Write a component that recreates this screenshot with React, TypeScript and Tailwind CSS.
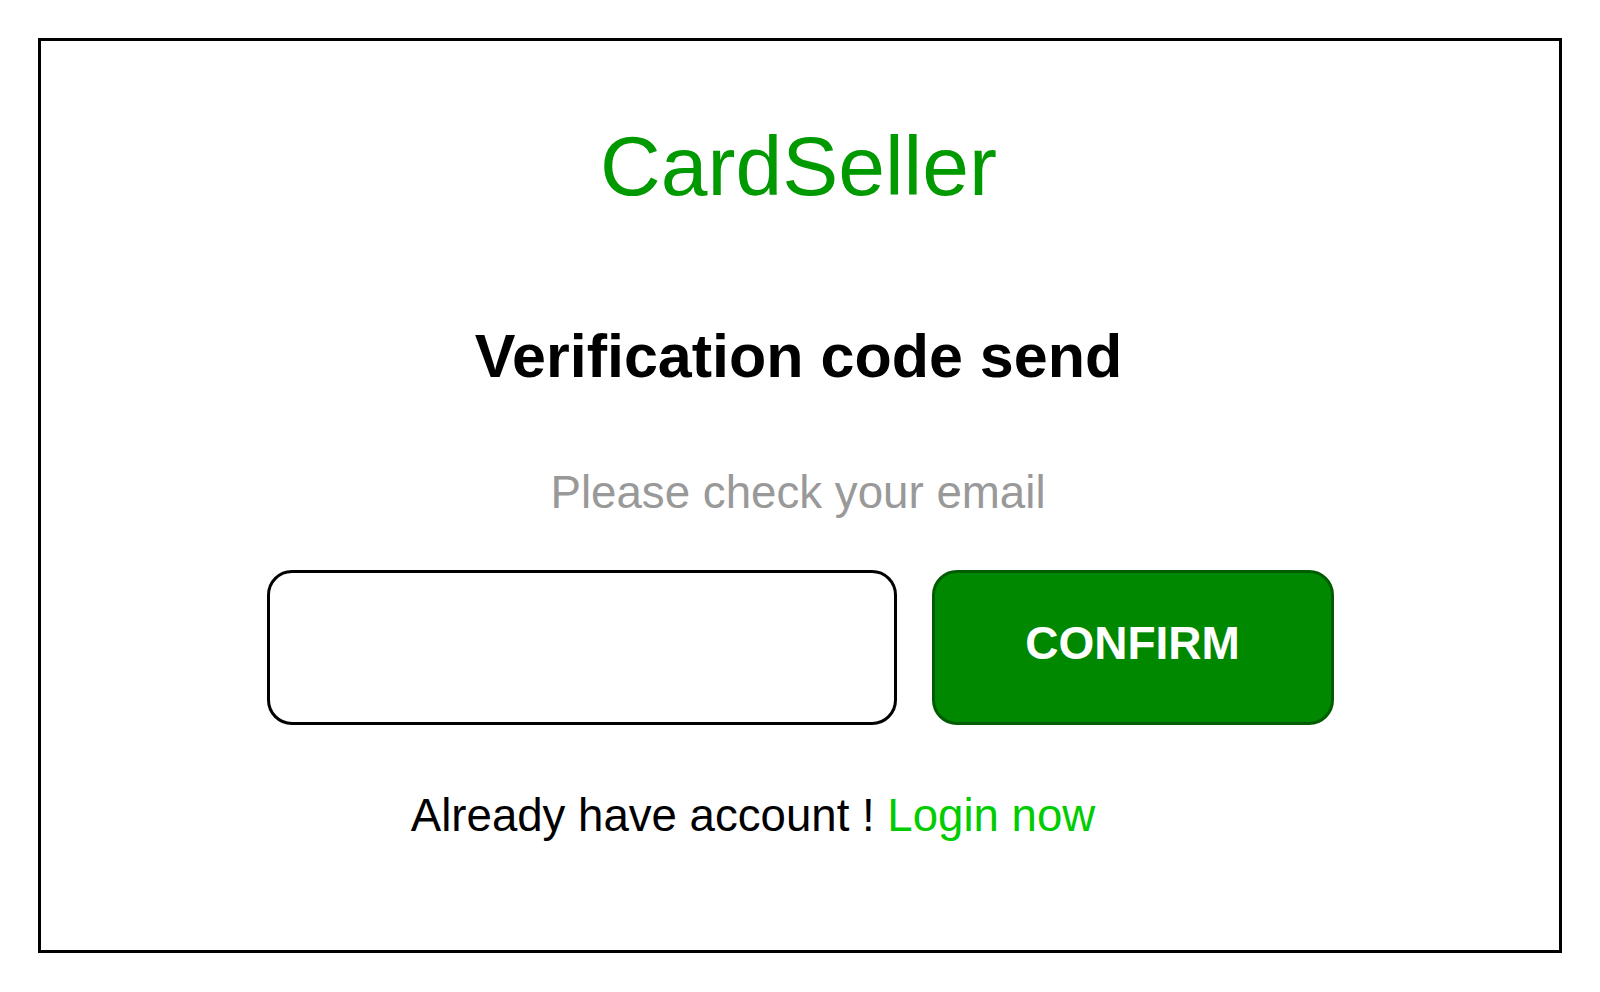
import React from "react";

export default function App() {
  return (
    <div className="w-[1600px] h-[992px] bg-white pt-[38px] px-[38px] font-['Liberation_Sans',Arial,sans-serif]">
      <div className="h-[915px] border-[3px] border-black flex flex-col items-center pt-[83px]">
        <div className="text-[84px] leading-none text-[#009900] pr-[3px]">CardSeller</div>
        <div className="mt-[118px] text-[61px] leading-none font-bold text-black pr-[3px]">
          Verification code send
        </div>
        <div className="mt-[83px] text-[45.7px] leading-none text-[#999999] pr-[4px]">
          Please check your email
        </div>
        <div className="mt-[54px] flex items-center gap-[35px]">
          <input
            type="text"
            className="w-[630px] h-[155px] border-[3px] border-black rounded-[25px] bg-white outline-none px-6 text-[40px]"
          />
          <button className="w-[402px] h-[155px] border-[3px] border-[#005c00] rounded-[25px] bg-[#008800] text-white font-bold text-[46px] leading-none pb-[8px]">
            CONFIRM
          </button>
        </div>
        <div className="mt-[68px] text-[45.6px] leading-none text-black pr-[94px]">
          Already have account ! <span className="text-[#00cc00]">Login now</span>
        </div>
      </div>
    </div>
  );
}
